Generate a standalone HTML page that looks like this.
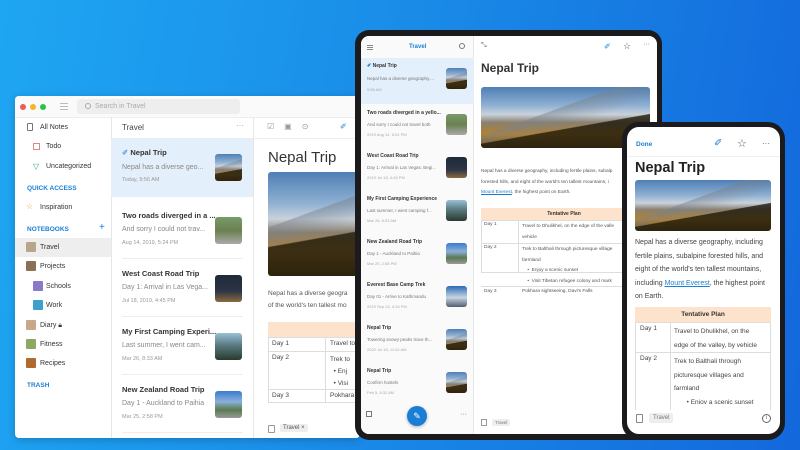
<!DOCTYPE html>
<html><head><meta charset="utf-8"><style>
*{margin:0;padding:0;box-sizing:border-box}
body{width:800px;height:450px;overflow:hidden;position:relative;font-family:"Liberation Sans",sans-serif;background:linear-gradient(100deg,#1ea6f2 0%,#1a8de8 45%,#1368dc 100%);color:#333}
.a{position:absolute;white-space:nowrap}
.img{position:absolute;border-radius:3px;background:
linear-gradient(170deg,transparent 62%,rgba(30,25,10,.8) 63%),
linear-gradient(160deg,transparent 40%,rgba(120,130,140,.5) 41%,transparent 60%),
linear-gradient(180deg,#4f7fb5 0%,#8fb0d2 30%,#c9d2dc 45%,#8a8070 58%,#b5812e 78%,#6a4a1a 100%);overflow:hidden}
.s{font-size:7px;color:#333}
.g{color:#999}
.b{font-weight:bold}
.blue{color:#1a7fd4}
</style></head><body>

<!-- MAC WINDOW -->
<div class="a" style="left:15px;top:96px;width:345px;height:342px;background:#fff;border-radius:4px;box-shadow:0 2px 8px rgba(0,0,0,.2)"></div>
<div class="a" style="left:15px;top:96px;width:345px;height:22px;background:#fafafa;border-bottom:1px solid #eee;border-radius:4px 4px 0 0"></div>
<div class="a" style="left:20px;top:104px;width:6px;height:6px;border-radius:50%;background:#f25a55"></div>
<div class="a" style="left:30px;top:104px;width:6px;height:6px;border-radius:50%;background:#f6b42c"></div>
<div class="a" style="left:40px;top:104px;width:6px;height:6px;border-radius:50%;background:#2dc33f"></div>
<div class="a" style="left:60px;top:103px;width:8px;height:1px;background:#bbb;box-shadow:0 3px 0 #bbb,0 6px 0 #bbb"></div>
<div class="a" style="left:77px;top:99px;width:163px;height:15px;background:#eee;border-radius:3px;font-size:7px;color:#aaa;padding:4px 0 0 18px">Search in Travel</div>
<div class="a" style="left:85px;top:103px;width:6px;height:6px;border:1px solid #aaa;border-radius:50%"></div>
<!-- sidebar -->
<div class="a" style="left:111px;top:118px;width:1px;height:320px;background:#e6e6e6"></div>
<div class="a" style="left:15px;top:238px;width:96px;height:19px;background:#eee"></div>
<div class="a s" style="left:40px;top:124px">All Notes</div>
<div class="a" style="left:27px;top:123px;width:6px;height:8px;border:1px solid #777;border-radius:1px"></div>
<div class="a s" style="left:46px;top:143px">Todo</div>
<div class="a" style="left:33px;top:143px;width:7px;height:7px;border:1px solid #d88"></div>
<div class="a s" style="left:46px;top:163px">Uncategorized</div>
<div class="a" style="left:33px;top:162px;font-size:8px;color:#3a6">▽</div>
<div class="a blue b" style="left:27px;top:185px;font-size:6.5px">QUICK ACCESS</div>
<div class="a s" style="left:40px;top:204px">Inspiration</div>
<div class="a" style="left:26px;top:202px;font-size:8px;color:#e5a520">☆</div>
<div class="a blue b" style="left:27px;top:226px;font-size:6.5px">NOTEBOOKS</div>
<div class="a blue" style="left:99px;top:222px;font-size:10px">+</div>
<div class="a s" style="left:40px;top:244px">Travel</div>
<div class="a" style="left:26px;top:242px;width:10px;height:10px;background:#b9a68a;border-radius:1px"></div>
<div class="a s" style="left:40px;top:263px">Projects</div>
<div class="a" style="left:26px;top:261px;width:10px;height:10px;background:#8a7055;border-radius:1px"></div>
<div class="a s" style="left:46px;top:283px">Schools</div>
<div class="a" style="left:33px;top:281px;width:10px;height:10px;background:#8a78c8;border-radius:1px"></div>
<div class="a s" style="left:46px;top:302px">Work</div>
<div class="a" style="left:33px;top:300px;width:10px;height:10px;background:#3f9fcf;border-radius:1px"></div>
<div class="a s" style="left:40px;top:322px">Diary 🔒︎</div>
<div class="a" style="left:26px;top:320px;width:10px;height:10px;background:#c8a888;border-radius:1px"></div>
<div class="a s" style="left:40px;top:341px">Fitness</div>
<div class="a" style="left:26px;top:339px;width:10px;height:10px;background:#8fa860;border-radius:1px"></div>
<div class="a s" style="left:40px;top:360px">Recipes</div>
<div class="a" style="left:26px;top:358px;width:10px;height:10px;background:#b06a30;border-radius:1px"></div>
<div class="a blue b" style="left:27px;top:382px;font-size:6.5px">TRASH</div>
<!-- list -->
<div class="a" style="left:253px;top:118px;width:1px;height:320px;background:#e6e6e6"></div>
<div class="a" style="left:122px;top:123px;font-size:8px;color:#444">Travel</div>
<div class="a g" style="left:236px;top:121px;font-size:8px">···</div>
<div class="a" style="left:111px;top:138px;width:142px;height:59px;background:#e3effb"></div>
<div class="a" style="left:122px;top:148px;font-size:7.5px;color:#333"><span class="blue">✐</span> <b>Nepal Trip</b></div>
<div class="a s g" style="left:122px;top:164px;color:#888">Nepal has a diverse geo...</div>
<div class="a g" style="left:122px;top:177px;font-size:5.5px">Today, 9:56 AM</div>
<div class="img" style="left:215px;top:154px;width:27px;height:27px"></div>

<div class="a b" style="left:122px;top:211px;font-size:7.5px;color:#333">Two roads diverged in a ...</div>
<div class="a s" style="left:122px;top:226px;color:#888">And sorry I could not trav...</div>
<div class="a g" style="left:122px;top:240px;font-size:5.5px">Aug 14, 2019, 5:24 PM</div>
<div class="img" style="left:215px;top:217px;width:27px;height:27px;background:linear-gradient(180deg,#7a9a6a,#6a8050 50%,#aaa 100%)"></div>
<div class="a" style="left:122px;top:258px;width:121px;height:1px;background:#eee"></div>

<div class="a b" style="left:122px;top:269px;font-size:7.5px;color:#333">West Coast Road Trip</div>
<div class="a s" style="left:122px;top:284px;color:#888">Day 1: Arrival in Las Vega...</div>
<div class="a g" style="left:122px;top:298px;font-size:5.5px">Jul 18, 2019, 4:45 PM</div>
<div class="img" style="left:215px;top:275px;width:27px;height:27px;background:linear-gradient(180deg,#1e2a3a,#2c3445 60%,#8a6a40)"></div>
<div class="a" style="left:122px;top:316px;width:121px;height:1px;background:#eee"></div>

<div class="a b" style="left:122px;top:327px;font-size:7.5px;color:#333">My First Camping Experi...</div>
<div class="a s" style="left:122px;top:342px;color:#888">Last summer, I went cam...</div>
<div class="a g" style="left:122px;top:356px;font-size:5.5px">Mar 26, 8:33 AM</div>
<div class="img" style="left:215px;top:333px;width:27px;height:27px;background:linear-gradient(180deg,#9ac0d8,#5a7a80 45%,#2a3a30)"></div>
<div class="a" style="left:122px;top:374px;width:121px;height:1px;background:#eee"></div>

<div class="a b" style="left:122px;top:385px;font-size:7.5px;color:#333">New Zealand Road Trip</div>
<div class="a s" style="left:122px;top:400px;color:#888">Day 1 - Auckland to Paihia</div>
<div class="a g" style="left:122px;top:414px;font-size:5.5px">Mar 25, 2:58 PM</div>
<div class="img" style="left:215px;top:391px;width:27px;height:27px;background:linear-gradient(180deg,#3a7ad0,#8ab0d8 40%,#5a7a50 70%,#999)"></div>
<div class="a" style="left:122px;top:432px;width:121px;height:1px;background:#eee"></div>
<!-- editor -->
<div class="a" style="left:253px;top:138px;width:107px;height:1px;background:#eee"></div>
<div class="a g" style="left:267px;top:122px;font-size:8px;letter-spacing:10px">☑▣⊙</div>
<div class="a blue" style="left:340px;top:122px;font-size:8px">✐</div>
<div class="a" style="left:268px;top:149px;font-size:15px;color:#333">Nepal Trip</div>
<div class="img" style="left:268px;top:172px;width:92px;height:104px;border-radius:3px 0 0 3px"></div>
<div class="a" style="left:268px;top:288px;font-size:6.5px;color:#555;line-height:12px">Nepal has a diverse geogra<br>of the world's ten tallest mo</div>
<div class="a" style="left:268px;top:322px;width:92px;height:15px;background:#fde3cc"></div>
<div class="a" style="left:268px;top:337px;width:92px;height:66px;border:1px solid #ddd;border-right:none"></div>
<div class="a" style="left:325px;top:337px;width:1px;height:66px;background:#ddd"></div>
<div class="a" style="left:268px;top:351px;width:92px;height:1px;background:#ddd"></div>
<div class="a" style="left:268px;top:389px;width:92px;height:1px;background:#ddd"></div>
<div class="a" style="left:272px;top:340px;font-size:6.5px;color:#444">Day 1</div>
<div class="a" style="left:330px;top:340px;font-size:6.5px;color:#444">Travel to</div>
<div class="a" style="left:272px;top:354px;font-size:6.5px;color:#444">Day 2</div>
<div class="a" style="left:330px;top:354px;font-size:6.5px;color:#444;line-height:12px">Trek to<br>&nbsp;&nbsp;• Enj<br>&nbsp;&nbsp;• Visi</div>
<div class="a" style="left:272px;top:392px;font-size:6.5px;color:#444">Day 3</div>
<div class="a" style="left:330px;top:392px;font-size:6.5px;color:#444">Pokhara</div>
<div class="a" style="left:268px;top:425px;width:7px;height:8px;border:1px solid #999;border-radius:1px"></div>
<div class="a" style="left:280px;top:424px;padding:1px 3px;background:#eee;border-radius:2px;font-size:6px;color:#555">Travel ×</div>

<!-- TABLET -->
<div class="a" style="left:355px;top:30px;width:307px;height:410px;background:#1b1b1d;border-radius:14px"></div>
<div class="a" style="left:361px;top:36px;width:296px;height:398px;background:#fff;border-radius:8px;overflow:hidden">
 <div class="a" style="left:0;top:0;width:113px;height:398px;background:#fafafa;border-right:1px solid #e8e8e8"></div>
 <div class="a" style="left:6px;top:9px;width:6px;height:1px;background:#888;box-shadow:0 2px 0 #888,0 4px 0 #888"></div>
 <div class="a blue b" style="left:48px;top:8px;font-size:6px">Travel</div>
 <div class="a" style="left:98px;top:7px;width:6px;height:6px;border:1px solid #777;border-radius:50%"></div>
 <div class="a" style="left:120px;top:6px;font-size:7px;color:#666">⤡</div>
 <div class="a blue" style="left:243px;top:6px;font-size:8px">✐</div>
 <div class="a" style="left:262px;top:5px;font-size:9px;color:#555">☆</div>
 <div class="a" style="left:282px;top:5px;font-size:7px;color:#666">···</div>
 <div class="a" style="left:0;top:22px;width:113px;height:46px;background:#e3effb"></div>
</div>
<!-- tablet list items -->
<div class="a b" style="left:367px;top:63px;font-size:5px"><span class="blue">✐</span> Nepal Trip</div>
<div class="a" style="left:367px;top:76px;font-size:4.5px;color:#777">Nepal has a diverse geography,...</div>
<div class="a" style="left:367px;top:87px;font-size:4px;color:#aaa">9:55 AM</div>
<div class="img" style="left:446px;top:68px;width:21px;height:21px"></div>

<div class="a b" style="left:367px;top:110px;font-size:5px">Two roads diverged in a yello...</div>
<div class="a" style="left:367px;top:122px;font-size:4.5px;color:#777">And sorry I could not travel both</div>
<div class="a" style="left:367px;top:132px;font-size:4px;color:#aaa">2019 Aug 14, 5:24 PM</div>
<div class="img" style="left:446px;top:114px;width:21px;height:21px;background:linear-gradient(180deg,#7a9a6a,#6a8050 50%,#aaa)"></div>

<div class="a b" style="left:367px;top:153px;font-size:5px">West Coast Road Trip</div>
<div class="a" style="left:367px;top:165px;font-size:4.5px;color:#777">Day 1: Arrival in Las Vegas. Begi...</div>
<div class="a" style="left:367px;top:175px;font-size:4px;color:#aaa">2019 Jul 18, 4:45 PM</div>
<div class="img" style="left:446px;top:157px;width:21px;height:21px;background:linear-gradient(180deg,#1e2a3a,#2c3445 60%,#8a6a40)"></div>

<div class="a b" style="left:367px;top:196px;font-size:5px">My First Camping Experience</div>
<div class="a" style="left:367px;top:208px;font-size:4.5px;color:#777">Last summer, I went camping f...</div>
<div class="a" style="left:367px;top:218px;font-size:4px;color:#aaa">Mar 26, 8:33 AM</div>
<div class="img" style="left:446px;top:200px;width:21px;height:21px;background:linear-gradient(180deg,#9ac0d8,#5a7a80 45%,#2a3a30)"></div>

<div class="a b" style="left:367px;top:239px;font-size:5px">New Zealand Road Trip</div>
<div class="a" style="left:367px;top:251px;font-size:4.5px;color:#777">Day 1 - Auckland to Paihia</div>
<div class="a" style="left:367px;top:261px;font-size:4px;color:#aaa">Mar 25, 2:58 PM</div>
<div class="img" style="left:446px;top:243px;width:21px;height:21px;background:linear-gradient(180deg,#3a7ad0,#8ab0d8 40%,#5a7a50 70%,#999)"></div>

<div class="a b" style="left:367px;top:282px;font-size:5px">Everest Base Camp Trek</div>
<div class="a" style="left:367px;top:294px;font-size:4.5px;color:#777">Day 01 - Arrive to Kathmandu</div>
<div class="a" style="left:367px;top:304px;font-size:4px;color:#aaa">2019 Sep 24, 4:34 PM</div>
<div class="img" style="left:446px;top:286px;width:21px;height:21px;background:linear-gradient(180deg,#2a6ab8,#c8d4e0 55%,#506070)"></div>

<div class="a b" style="left:367px;top:325px;font-size:5px">Nepal Trip</div>
<div class="a" style="left:367px;top:337px;font-size:4.5px;color:#777">Towering snowy peaks trace th...</div>
<div class="a" style="left:367px;top:347px;font-size:4px;color:#aaa">2020 Jul 18, 11:42 AM</div>
<div class="img" style="left:446px;top:329px;width:21px;height:21px"></div>

<div class="a b" style="left:367px;top:368px;font-size:5px">Nepal Trip</div>
<div class="a" style="left:367px;top:380px;font-size:4.5px;color:#777">Confirm hostels</div>
<div class="a" style="left:367px;top:390px;font-size:4px;color:#aaa">Feb 5, 8:32 AM</div>
<div class="img" style="left:446px;top:372px;width:21px;height:21px"></div>
<div class="a" style="left:366px;top:411px;width:6px;height:6px;border:1px solid #777"></div>
<div class="a" style="left:460px;top:411px;font-size:7px;color:#666">···</div>
<div class="a" style="left:407px;top:406px;width:20px;height:20px;border-radius:50%;background:#1a7fd4;color:#fff;font-size:9px;text-align:center;line-height:20px;box-shadow:0 1px 3px rgba(0,0,0,.3)">✎</div>
<!-- tablet editor -->
<div class="a b" style="left:481px;top:61px;font-size:12px;color:#333">Nepal Trip</div>
<div class="img" style="left:481px;top:87px;width:169px;height:61px"></div>
<div class="a" style="left:481px;top:167px;font-size:4.8px;color:#555;line-height:10.5px">Nepal has a diverse geography, including fertile plains, subalp<br>forested hills, and eight of the world's ten tallest mountains, i<br><span class="blue" style="text-decoration:underline">Mount Everest</span>, the highest point on Earth.</div>
<div class="a" style="left:481px;top:208px;width:176px;height:12px;background:#fde3cc;font-size:5px;font-weight:bold;text-align:center;line-height:12px;padding-right:10px">Tentative Plan</div>
<div class="a" style="left:481px;top:220px;width:176px;height:53px;border:1px solid #ddd;border-right:none"></div>
<div class="a" style="left:518px;top:220px;width:1px;height:53px;background:#ddd"></div>
<div class="a" style="left:481px;top:243px;width:176px;height:1px;background:#ddd"></div>
<div class="a" style="left:481px;top:286px;width:176px;height:1px;background:#ddd"></div>
<div class="a" style="left:484px;top:222px;font-size:4.8px;color:#555">Day 1</div>
<div class="a" style="left:522px;top:222px;font-size:4.8px;color:#555;line-height:10.5px">Travel to Dhulikhel, on the edge of the valle<br>vehicle</div>
<div class="a" style="left:484px;top:245px;font-size:4.8px;color:#555">Day 2</div>
<div class="a" style="left:522px;top:245px;font-size:4.8px;color:#555;line-height:10.5px">Trek to Balthali through picturesque village<br>farmland<br>&nbsp;&nbsp;&nbsp;&nbsp;•&nbsp; Enjoy a scenic sunset<br>&nbsp;&nbsp;&nbsp;&nbsp;•&nbsp; Visit Tibetan refugee colony and mark</div>
<div class="a" style="left:484px;top:289px;font-size:4.8px;color:#555">Day 3</div>
<div class="a" style="left:522px;top:289px;font-size:4.8px;color:#555">Pokhara sightseeing, Davi's Falls</div>
<div class="a" style="left:481px;top:419px;width:6px;height:7px;border:1px solid #999"></div>
<div class="a" style="left:492px;top:419px;padding:1px 3px;background:#eee;border-radius:2px;font-size:4.5px;color:#777">Travel</div>

<!-- PHONE -->
<div class="a" style="left:622px;top:122px;width:163px;height:318px;background:#1b1b1d;border-radius:17px"></div>
<div class="a" style="left:627px;top:127px;width:153px;height:307px;background:#fff;border-radius:12px"></div>
<div class="a blue b" style="left:636px;top:141px;font-size:6.5px">Done</div>
<div class="a blue" style="left:714px;top:138px;font-size:10px">✐</div>
<div class="a" style="left:737px;top:137px;font-size:11px;color:#555">☆</div>
<div class="a" style="left:762px;top:139px;font-size:8px;color:#555">···</div>
<div class="a" style="left:627px;top:156px;width:153px;height:1px;background:#f0f0f0"></div>
<div class="a b" style="left:635px;top:160px;font-size:14.5px;color:#222">Nepal Trip</div>
<div class="img" style="left:635px;top:180px;width:136px;height:51px"></div>
<div class="a" style="left:635px;top:236px;font-size:7px;color:#444;line-height:13.6px">Nepal has a diverse geography, including<br>fertile plains, subalpine forested hills, and<br>eight of the world's ten tallest mountains,<br>including <span class="blue" style="text-decoration:underline">Mount Everest</span>, the highest point<br>on Earth.</div>
<div class="a" style="left:635px;top:307px;width:136px;height:15px;background:#fde3cc;font-size:6.5px;font-weight:bold;text-align:center;line-height:15px;color:#333">Tentative Plan</div>
<div class="a" style="left:635px;top:322px;width:136px;height:90px;border:1px solid #ddd;border-bottom:none"></div>
<div class="a" style="left:670px;top:322px;width:1px;height:90px;background:#ddd"></div>
<div class="a" style="left:635px;top:352px;width:136px;height:1px;background:#ddd"></div>
<div class="a" style="left:640px;top:325px;font-size:6.5px;color:#444">Day 1</div>
<div class="a" style="left:674px;top:325px;font-size:6.5px;color:#444;line-height:13.6px">Travel to Dhulikhel, on the<br>edge of the valley, by vehicle</div>
<div class="a" style="left:640px;top:355px;font-size:6.5px;color:#444">Day 2</div>
<div class="a" style="left:674px;top:355px;font-size:6.5px;color:#444;line-height:13.6px">Trek to Balthali through<br>picturesque villages and<br>farmland<br>&nbsp;&nbsp;&nbsp;&nbsp;&nbsp;&nbsp;&nbsp;• Eniov a scenic sunset</div>
<div class="a" style="left:627px;top:410px;width:153px;height:22px;background:#fff;border-radius:0 0 12px 12px"></div>
<div class="a" style="left:636px;top:414px;width:7px;height:9px;border:1px solid #888;border-radius:1px"></div>
<div class="a" style="left:649px;top:413px;padding:2px 4px;background:#eee;border-radius:2px;font-size:6px;color:#777">Travel</div>
<div class="a" style="left:762px;top:414px;width:9px;height:9px;border:1px solid #666;border-radius:50%;font-size:6px;text-align:center;line-height:7px;color:#666">i</div>
</body></html>
